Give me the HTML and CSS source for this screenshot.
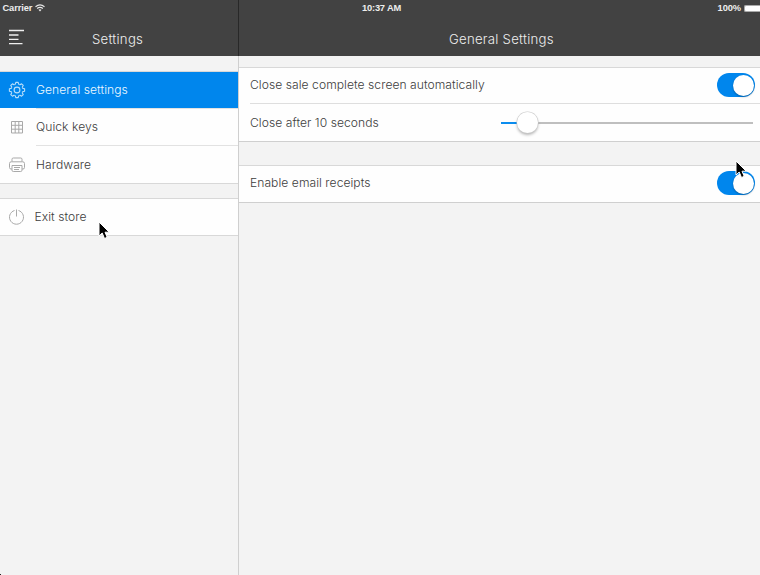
FILE: index.html
```html
<!DOCTYPE html>
<html lang="en">
<head>
<meta charset="utf-8">
<title>Settings</title>
<link rel="stylesheet" href="styles.css">
</head>
<body>
<div class="screen">
  <header class="topbar">
    <div class="status">
      <div class="carrier"><span>Carrier</span>
        <svg width="10" height="8" viewBox="0 0 10 8" fill="none" stroke="#e8e8e8" stroke-width="1.1"><path d="M.5 2.7Q5-.9 9.500 2.700M2.100 4.500Q5 2.200 7.900 4.500"/><path d="M3.500 5.700Q5 4.600 6.500 5.700L5 7.400Z" fill="#e8e8e8" stroke="none"/></svg>
      </div>
      <div class="clock">10:37 AM</div>
      <div class="power"><span>100%</span><span class="battery"></span></div>
    </div>
    <div class="nav">
      <div class="nav-side">
        <svg class="menu" width="16" height="16" viewBox="0 0 16 16" stroke="#efefef" stroke-width="1.3"><path d="M0 1.500H15M0 6H9.500M0 10.300H9.500M0 14.700H13.500"/></svg>
        <h1 class="title title-side">Settings</h1>
      </div>
      <h1 class="title title-main">General Settings</h1>
    </div>
  </header>
  <div class="body">
    <nav class="sidebar">
      <div class="group">
        <div class="item active">
          <svg class="icon" width="18" height="18" viewBox="-9 -9 18 18" fill="none" stroke="#b9dffa" stroke-width="1.1" stroke-linejoin="round">
            <defs><path id="tooth" d="M-2.300-5.540L-1.600-5.900-1.200-7.600H1.200L1.600-5.900 2.300-5.540"/></defs>
            <use href="#tooth"/><use href="#tooth" transform="rotate(45)"/><use href="#tooth" transform="rotate(90)"/><use href="#tooth" transform="rotate(135)"/><use href="#tooth" transform="rotate(180)"/><use href="#tooth" transform="rotate(225)"/><use href="#tooth" transform="rotate(270)"/><use href="#tooth" transform="rotate(315)"/>
            <circle r="2.900"/>
          </svg>
          <span class="label">General settings</span>
        </div>
        <div class="item">
          <svg class="icon" width="18" height="18" viewBox="0 0 18 18" fill="none" stroke="#a9a9a9" stroke-width="1"><path d="M3.500 3.500H14.500V15H3.500ZM7.200 3.500V15M10.800 3.500V15M3.500 7.300H14.500M3.500 11.200H14.500"/></svg>
          <span class="label">Quick keys</span>
        </div>
        <div class="item">
          <svg class="icon" width="18" height="18" viewBox="0 0 18 18" fill="none" stroke="#a9a9a9" stroke-width="1" stroke-linejoin="round"><path d="M4 5.500V3.300Q4 2 5.300 2H12.700Q14 2 14 3.300V5.500M4 13H3Q1.500 13 1.500 11.500V7.500Q1.500 5.800 3.200 5.800H14.800Q16.500 5.800 16.500 7.500V11.500Q16.500 13 15 13H14M4 9.500H14V14.200Q14 15.500 12.700 15.500H5.300Q4 15.500 4 14.200ZM6 11.500H12M6 13.500H11"/></svg>
          <span class="label">Hardware</span>
        </div>
      </div>
      <div class="group group-exit">
        <div class="item exit">
          <svg class="icon" width="18" height="18" viewBox="0 0 18 18" fill="none" stroke="#a9a9a9" stroke-width="1"><path d="M6.500 2.500A7 7 0 1 0 10.500 2.500M8.500 1.500V8.500"/></svg>
          <span class="label">Exit store</span>
        </div>
      </div>
    </nav>
    <main class="content">
      <section class="panel">
        <div class="row row-auto"><span class="label">Close sale complete screen automatically</span><span class="toggle"></span></div>
        <div class="row row-delay"><span class="label">Close after 10 seconds</span><span class="slider"><span class="knob"></span></span></div>
      </section>
      <section class="panel panel-email">
        <div class="row row-email"><span class="label">Enable email receipts</span><span class="toggle"></span></div>
      </section>
    </main>
  </div>
  <svg class="cursor cursor-left" width="12" height="19" viewBox="0 0 12 19"><path d="M1 1V15L4.200 12 6.500 17.500 9.200 16.300 7 11.200H11.200Z" fill="#000" stroke="#fff" stroke-width="1"/></svg>
  <svg class="cursor cursor-right" width="12" height="19" viewBox="0 0 12 19"><path d="M1 1V15L4.200 12 6.500 17.500 9.200 16.300 7 11.200H11.200Z" fill="#000" stroke="#fff" stroke-width="1"/></svg>
  <span class="corner"></span>
</div>
</body>
</html>
```
FILE: styles.css
```css
* { box-sizing: border-box; }
body { margin: 0; font-family: Inter, "Liberation Sans", sans-serif; }
.screen { position: relative; width: 760px; height: 575px; background: #f3f3f3; overflow: hidden; display: flex; flex-direction: column; }
.topbar { height: 56px; background: #424242; color: #eee; }
.status { height: 16px; display: grid; grid-template-columns: 1fr auto 1fr; align-items: center; font: bold 9.3px/16px "Liberation Sans", sans-serif; }
.carrier { display: flex; align-items: center; gap: 3px; padding-left: 2.5px; letter-spacing: -.1px; }
.clock { letter-spacing: -.2px; padding-left: 3px; }
.power { display: flex; justify-content: flex-end; align-items: center; gap: 3px; letter-spacing: -.1px; }
.battery { width: 16px; height: 7px; border: 1px solid #aaa; border-right: 0; border-radius: 2px 0 0 2px; background: #fff; }
.nav { height: 40px; display: flex; }
.nav-side { width: 239px; border-right: 1px solid #282828; display: flex; margin-top: -16px; padding-top: 16px; height: 56px; }
.menu { margin: 13px 0 0 9px; }
.title { margin: 0; font-size: 13.2px; font-weight: 300; line-height: 46px; white-space: nowrap; letter-spacing: .25px; }
.title-side { margin-left: 67px; }
.title-main { margin-left: 210px; }
.body { flex: 1; display: flex; }
.sidebar { width: 239px; border-right: 1px solid #cfcfcf; padding-top: 15px; }
.group { background: #fefefe; border-top: 1px solid #d8d8d8; border-bottom: 1px solid #d8d8d8; }
.group-exit { margin-top: 14px; }
.item { display: flex; align-items: center; height: 37px; padding-left: 8px; gap: 10px; background: linear-gradient(#e2e2e2, #e2e2e2) 36px 0 / 100% 1px no-repeat; }
.item:nth-child(3) { height: 38px; padding-top: 1px; }
.item.active { height: 36px; background: #0086ed; }
.item.exit { height: 36px; background: none; gap: 8.500px; padding-bottom: 1px; }
.icon { flex: none; }
.label { font-size: 12.1px; font-weight: 300; line-height: 18px; color: #3c3c3c; white-space: nowrap; letter-spacing: .05px; }
.active .label { color: #eef8ff; }
.content { flex: 1; padding-top: 11px; }
.panel { background: #fefefe; border-top: 1px solid #d8d8d8; border-bottom: 1px solid #cfcfcf; }
.panel-email { margin-top: 23px; }
.row { display: flex; justify-content: space-between; align-items: center; padding: 0 5px 0 11px; }
.row-auto { height: 35px; padding-bottom: 1px; }
.row-delay { height: 38px; padding-right: 7px; padding-top: 1px; background: linear-gradient(#dedede, #dedede) 11px 0 / 100% 1px no-repeat; }
.row-email { height: 36px; padding-bottom: 2px; }
.toggle { width: 38.5px; height: 24px; border-radius: 12px; background: #0086ed; display: flex; justify-content: flex-end; padding: 1.500px; }
.toggle::after { content: ""; width: 21px; height: 21px; border-radius: 50%; background: #fff; box-shadow: 0 1px 2px rgba(0,0,0,.3); }
.slider { width: 252px; height: 22px; padding-left: 15.5px; background: linear-gradient(90deg, #0b8def 20px, #bfbfbf 20px) 0 50% / 100% 2px no-repeat; }
.knob { display: block; width: 21px; height: 21px; border-radius: 50%; background: #fff; box-shadow: 0 0 0 .5px #ccc, 0 2px 3px rgba(0,0,0,.3); }
.cursor { position: absolute; }
.cursor-left { left: 98px; top: 221px; }
.cursor-right { left: 735px; top: 160px; }
.corner { position: absolute; left: 0; bottom: 0; width: 1px; height: 1px; background: #222; }
```
